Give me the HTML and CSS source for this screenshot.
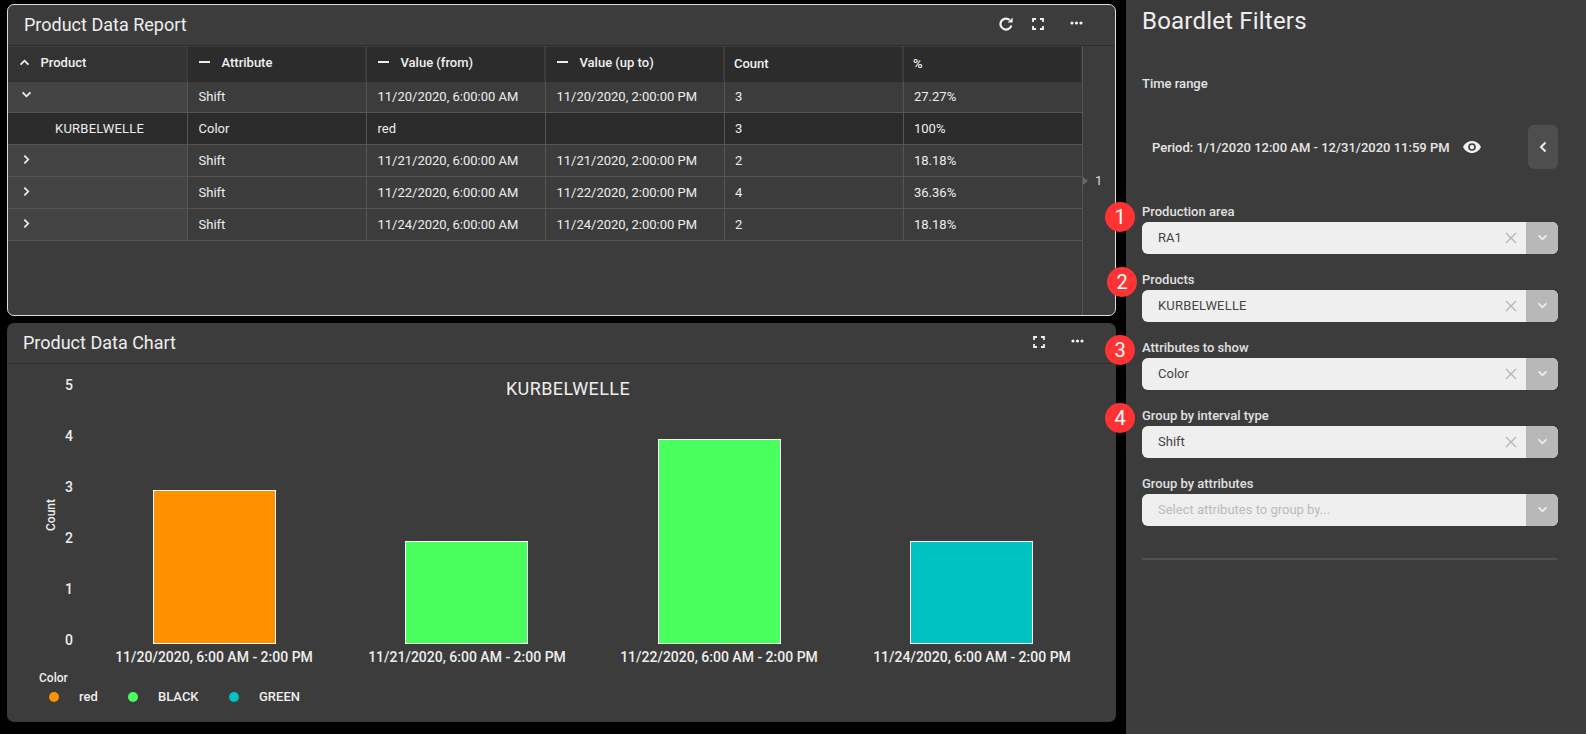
FILE: index.html
```html
<!DOCTYPE html>
<html lang="en">
<head>
  <meta charset="UTF-8">
  <title>Product Data</title>
  <link rel="stylesheet" href="styles.css">
</head>
<body>
  <svg class="icon-defs" width="0" height="0">
    <symbol id="ic-expand" viewBox="0 0 12 12">
      <path d="M1 4V1h3M8 1h3v3M11 8v3H8M4 11H1V8" fill="none" stroke="currentColor" stroke-width="1.8"/>
    </symbol>
    <symbol id="ic-dots" viewBox="0 0 13 4">
      <circle cx="2" cy="2" r="1.6" fill="currentColor"/>
      <circle cx="6.5" cy="2" r="1.6" fill="currentColor"/>
      <circle cx="11" cy="2" r="1.6" fill="currentColor"/>
    </symbol>
    <symbol id="ic-down" viewBox="0 0 12 8">
      <path d="M1.5 1.5 6 6l4.5-4.5" fill="none" stroke="currentColor" stroke-width="2"/>
    </symbol>
    <symbol id="ic-right" viewBox="0 0 8 12">
      <path d="M1.5 1.5 6 6l-4.5 4.5" fill="none" stroke="currentColor" stroke-width="2"/>
    </symbol>
    <symbol id="ic-x" viewBox="0 0 12 12">
      <path d="M1 1l10 10M11 1 1 11" fill="none" stroke="currentColor" stroke-width="1.3"/>
    </symbol>
  </svg>

  <div class="main">
    <section class="panel panel-report">
      <header class="panel-head">
        <h2>Product Data Report</h2>
        <div class="tools">
          <svg class="tool-refresh" viewBox="0 0 14 14" width="14" height="14">
            <path d="M12.300 8.400A5.500 5.500 0 1 1 10.600 2.900" fill="none" stroke="currentColor" stroke-width="2.200"/>
            <path d="M8.600 5.600h5V.6z" fill="currentColor"/>
          </svg>
          <svg class="tool-expand"><use href="#ic-expand"/></svg>
          <svg class="tool-dots"><use href="#ic-dots"/></svg>
        </div>
      </header>
      <div class="report-body">
        <table class="report">
          <colgroup>
            <col class="col-first"><col><col><col><col><col>
          </colgroup>
          <thead>
            <tr>
              <th class="th-first"><span class="th-in"><svg class="th-up"><use href="#ic-down"/></svg>Product</span></th>
              <th><span class="th-in"><i class="dash"></i>Attribute</span></th>
              <th><span class="th-in"><i class="dash"></i>Value (from)</span></th>
              <th><span class="th-in"><i class="dash"></i>Value (up to)</span></th>
              <th>Count</th>
              <th>%</th>
            </tr>
          </thead>
          <tbody>
            <tr>
              <td class="first"><svg class="chev-down"><use href="#ic-down"/></svg></td>
              <td>Shift</td><td>11/20/2020, 6:00:00 AM</td><td>11/20/2020, 2:00:00 PM</td><td>3</td><td>27.27%</td>
            </tr>
            <tr class="child">
              <td class="product">KURBELWELLE</td>
              <td>Color</td><td>red</td><td></td><td>3</td><td>100%</td>
            </tr>
            <tr>
              <td class="first"><svg class="chev-right"><use href="#ic-right"/></svg></td>
              <td>Shift</td><td>11/21/2020, 6:00:00 AM</td><td>11/21/2020, 2:00:00 PM</td><td>2</td><td>18.18%</td>
            </tr>
            <tr>
              <td class="first"><svg class="chev-right"><use href="#ic-right"/></svg></td>
              <td>Shift</td><td>11/22/2020, 6:00:00 AM</td><td>11/22/2020, 2:00:00 PM</td><td>4</td><td>36.36%</td>
            </tr>
            <tr>
              <td class="first"><svg class="chev-right"><use href="#ic-right"/></svg></td>
              <td>Shift</td><td>11/24/2020, 6:00:00 AM</td><td>11/24/2020, 2:00:00 PM</td><td>2</td><td>18.18%</td>
            </tr>
          </tbody>
        </table>
        <div class="pager"><i class="pager-arrow"></i><span>1</span></div>
      </div>
    </section>

    <section class="panel panel-chart">
      <header class="panel-head">
        <h2>Product Data Chart</h2>
        <div class="tools">
          <svg class="tool-expand"><use href="#ic-expand"/></svg>
          <svg class="tool-dots"><use href="#ic-dots"/></svg>
        </div>
      </header>
      <!-- svg coords = page coords minus panel origin (7, 364) -->
      <svg class="chart" viewBox="0 0 1109 358" width="1109" height="358">
        <text class="chart-title" x="561" y="31">KURBELWELLE</text>

        <text class="tick" x="66" y="26">5</text>
        <text class="tick" x="66" y="77">4</text>
        <text class="tick" x="66" y="128">3</text>
        <text class="tick" x="66" y="179">2</text>
        <text class="tick" x="66" y="230">1</text>
        <text class="tick" x="66" y="281">0</text>
        <text class="axis-name" transform="translate(48 151) rotate(-90)">Count</text>

        <rect class="bar" x="146.5" y="126.5" width="122" height="153" fill="#ff9100"/>
        <rect class="bar" x="398.5" y="177.5" width="122" height="102" fill="#48ff5e"/>
        <rect class="bar" x="651.5" y="75.5" width="122" height="204" fill="#48ff5e"/>
        <rect class="bar" x="903.5" y="177.5" width="122" height="102" fill="#00c2c2"/>

        <text class="x-label" x="207" y="298">11/20/2020, 6:00 AM - 2:00 PM</text>
        <text class="x-label" x="460" y="298">11/21/2020, 6:00 AM - 2:00 PM</text>
        <text class="x-label" x="712" y="298">11/22/2020, 6:00 AM - 2:00 PM</text>
        <text class="x-label" x="965" y="298">11/24/2020, 6:00 AM - 2:00 PM</text>

        <text class="legend-title" x="32" y="318">Color</text>
        <circle cx="47" cy="333" r="5" fill="#ff9100"/>
        <text class="legend" x="72" y="337">red</text>
        <circle cx="126" cy="333" r="5" fill="#48ff5e"/>
        <text class="legend" x="151" y="337">BLACK</text>
        <circle cx="227" cy="333" r="5" fill="#00c2c2"/>
        <text class="legend" x="252" y="337">GREEN</text>
      </svg>
    </section>
  </div>

  <aside class="filters">
    <h1>Boardlet Filters</h1>
    <div class="time-label">Time range</div>
    <div class="period">
      <span class="period-text">Period: 1/1/2020 12:00 AM - 12/31/2020 11:59 PM</span>
      <svg class="eye" viewBox="0 0 18 12" width="18" height="12">
        <path fill-rule="evenodd" fill="currentColor" d="M9 0c4 0 7.300 2.500 9 6-1.700 3.500-5 6-9 6S1.700 9.500 0 6c1.700-3.500 5-6 9-6zm0 2.200a3.800 3.800 0 1 0 0 7.600 3.800 3.800 0 0 0 0-7.600zm0 1.600a2.200 2.200 0 1 1 0 4.400 2.200 2.200 0 0 1 0-4.400z"/>
      </svg>
      <button class="collapse"><svg class="collapse-icon" viewBox="0 0 8 12"><path d="M6.500 1.500 2 6l4.500 4.500" fill="none" stroke="currentColor" stroke-width="2"/></svg></button>
    </div>

    <div class="field">
      <label>Production area</label>
      <div class="select"><span class="value">RA1</span><svg class="clear"><use href="#ic-x"/></svg><span class="arrow"><svg><use href="#ic-down"/></svg></span></div>
      <span class="badge badge-1">1</span>
    </div>
    <div class="field">
      <label>Products</label>
      <div class="select"><span class="value caps">KURBELWELLE</span><svg class="clear"><use href="#ic-x"/></svg><span class="arrow"><svg><use href="#ic-down"/></svg></span></div>
      <span class="badge badge-2">2</span>
    </div>
    <div class="field">
      <label>Attributes to show</label>
      <div class="select"><span class="value">Color</span><svg class="clear"><use href="#ic-x"/></svg><span class="arrow"><svg><use href="#ic-down"/></svg></span></div>
      <span class="badge badge-3">3</span>
    </div>
    <div class="field">
      <label>Group by interval type</label>
      <div class="select"><span class="value">Shift</span><svg class="clear"><use href="#ic-x"/></svg><span class="arrow"><svg><use href="#ic-down"/></svg></span></div>
      <span class="badge badge-4">4</span>
    </div>
    <div class="field">
      <label>Group by attributes</label>
      <div class="select"><span class="value placeholder">Select attributes to group by...</span><span class="arrow"><svg><use href="#ic-down"/></svg></span></div>
    </div>
    <hr class="divider">
  </aside>
</body>
</html>
```

FILE: styles.css
```css
* {
  box-sizing: border-box;
}
html, body {
  height: 100%;
}
body {
  margin: 0;
  background: #000;
  color: #eee;
  font-family: Roboto, "Liberation Sans", sans-serif;
  font-size: 13px;
  display: flex;
  overflow: hidden;
}
.icon-defs {
  position: absolute;
}

.main {
  width: 1126px;
  flex: none;
  padding: 4px 10px 0 7px;
  display: flex;
  flex-direction: column;
  gap: 7px;
}
.panel {
  background: #3c3c3c;
  border-radius: 7px;
  overflow: hidden;
}
.panel-report {
  height: 312px;
  border: 1px solid #ddd;
  display: flex;
  flex-direction: column;
}
.panel-chart {
  height: 399px;
}
.panel-head {
  height: 41px;
  flex: none;
  display: flex;
  align-items: center;
  justify-content: space-between;
  border-bottom: 1px solid #2e2e2e;
  padding: 0 0 2px 16px;
}
.panel-head h2 {
  margin: 0;
  font-size: 18px;
  font-weight: 400;
  color: #eee;
}
.tools {
  display: flex;
  align-items: center;
  color: #f0f0f0;
  padding-right: 32px;
}
.tool-refresh {
  margin-right: 19px;
}
.tool-expand {
  width: 12px;
  height: 12px;
  margin-right: 26px;
}
.tool-dots {
  width: 13px;
  height: 4px;
  margin-bottom: 2px;
}

.report-body {
  flex: 1;
  display: flex;
  min-height: 0;
}
.report {
  width: 1075px;
  flex: none;
  table-layout: fixed;
  border-collapse: separate;
  border-spacing: 0;
  align-self: flex-start;
}
.col-first {
  width: 180px;
}
.report th {
  height: 36px;
  background: #2c2c2c;
  border-right: 2px solid #3c3c3c;
  border-top: 1px solid #3c3c3c;
  padding: 0 0 3px 9px;
  text-align: left;
  font-weight: 500;
  color: #f0f0f0;
}
.report th.th-first {
  background: #333;
  padding-left: 11px;
}
.th-in {
  display: flex;
  align-items: center;
  padding-bottom: 2px;
}
.dash {
  width: 11px;
  height: 2px;
  background: #eee;
  margin: 0 11.5px 0 2px;
}
.th-up {
  width: 11px;
  height: 7px;
  transform: rotate(180deg);
  margin-right: 10.5px;
}
.report td {
  height: 32px;
  padding: 0 0 0 10.5px;
  border-right: 1px solid #555;
  border-bottom: 1px solid #555;
  font-weight: 400;
  color: #eee;
  background: #3c3c3c;
}
.report tbody tr:first-child td {
  height: 31px;
  padding-bottom: 2px;
}
.report td:nth-child(n+5) {
  padding-left: 10px;
}
.report td.first {
  background: #444;
  padding-left: 14px;
}
.report .child td {
  background: #2c2c2c;
}
.report td.product {
  padding-left: 47px;
  letter-spacing: 0.25px;
}
.chev-down {
  display: block;
  width: 11px;
  height: 7px;
  margin: -3px 0 0 -1px;
}
.chev-right {
  display: block;
  width: 7px;
  height: 11px;
  margin: -3px 0 0 1px;
}
.pager {
  flex: 1;
  border-left: 1px solid #555;
  display: flex;
  align-items: center;
  margin-left: -1px;
  height: 100%;
  color: #ddd;
}
.pager-arrow {
  width: 0;
  height: 0;
  border-left: 5px solid #666;
  border-top: 4px solid transparent;
  border-bottom: 4px solid transparent;
  margin-right: 7px;
}

.chart {
  display: block;
}
.chart text {
  font-family: Roboto, "Liberation Sans", sans-serif;
  fill: #eee;
}
.chart-title {
  font-size: 18px;
  letter-spacing: 0.4px;
  text-anchor: middle;
}
.tick {
  font-size: 14px;
  font-weight: 500;
  text-anchor: end;
}
.axis-name {
  font-size: 12px;
  font-weight: 500;
  text-anchor: middle;
}
.bar {
  stroke: #fff;
  stroke-width: 1;
}
.x-label {
  font-size: 14px;
  font-weight: 500;
  text-anchor: middle;
}
.legend-title {
  font-size: 12px;
  font-weight: 500;
}
.legend {
  font-size: 13px;
  font-weight: 500;
}

.filters {
  flex: 1;
  background: #3c3c3c;
  padding: 0 28px 0 16px;
  display: flex;
  flex-direction: column;
}
.filters h1 {
  margin: 0;
  padding-top: 6px;
  height: 70px;
  font-size: 24px;
  line-height: 30px;
  font-weight: 400;
  letter-spacing: 0.2px;
  color: #eee;
}
.time-label {
  font-weight: 500;
  height: 16px;
  line-height: 16px;
  margin-top: 6px;
  color: #e6e6e6;
}
.period {
  margin-top: 33px;
  height: 44px;
  display: flex;
  align-items: center;
  padding-left: 10px;
  font-weight: 500;
}
.period-text {
  width: 311px;
  color: #e6e6e6;
}
.eye {
  color: #eee;
}
.collapse {
  margin-left: auto;
  width: 30px;
  height: 44px;
  padding: 0;
  border: none;
  border-radius: 6px;
  background: #4e4e4e;
  color: #eee;
  display: flex;
  align-items: center;
  justify-content: center;
}
.collapse-icon {
  width: 8px;
  height: 12px;
}
.field {
  position: relative;
  height: 68px;
  padding-top: 14px;
}
.period + .field {
  margin-top: 21px;
}
.field label {
  display: block;
  height: 18px;
  line-height: 16px;
  font-weight: 500;
  color: #e0e0e0;
}
.select {
  height: 32px;
  background: #efefef;
  border-radius: 6px;
  overflow: hidden;
  display: flex;
  align-items: center;
  padding-left: 16px;
  color: #444;
}
.value {
  flex: 1;
  padding-bottom: 2px;
}
.caps {
  letter-spacing: 0.2px;
}
.placeholder {
  color: #bbb;
}
.clear {
  width: 12px;
  height: 12px;
  color: #b5b5b5;
  margin-right: 9px;
}
.arrow {
  width: 32px;
  height: 100%;
  background: #b8b8b8;
  color: #eee;
  display: flex;
  align-items: center;
  justify-content: center;
  padding-bottom: 2px;
}
.arrow svg {
  width: 11px;
  height: 7px;
}
.divider {
  margin: 28px 0 0;
  border: none;
  height: 2px;
  background: #505050;
}
.badge {
  position: absolute;
  width: 30px;
  height: 30px;
  border-radius: 50%;
  background: #ff3333;
  color: #fff;
  font-size: 20px;
  font-weight: 400;
  line-height: 30px;
  text-align: center;
}
.badge-1 { left: -37px; top: 12px; }
.badge-2 { left: -35px; top: 9px; }
.badge-3 { left: -37px; top: 9px; }
.badge-4 { left: -37px; top: 9px; }
```
